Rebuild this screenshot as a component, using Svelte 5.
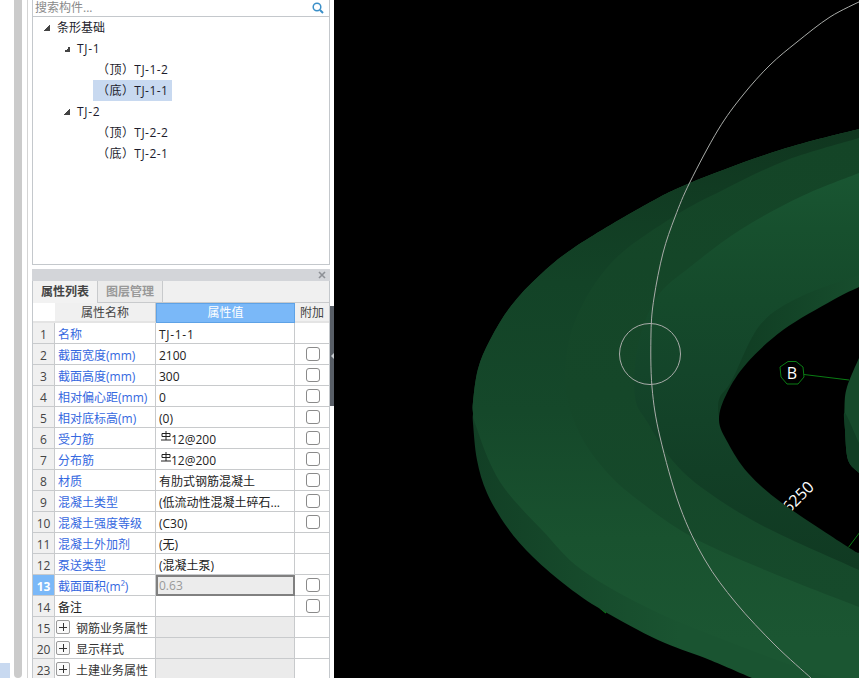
<script>
  const tree = [
    { level: 1, label: '条形基础', arrow: true },
    { level: 2, label: 'TJ-1', arrow: true },
    { level: 3, label: '（顶）TJ-1-2' },
    { level: 3, label: '（底）TJ-1-1', selected: true },
    { level: 2, label: 'TJ-2', arrow: true },
    { level: 3, label: '（顶）TJ-2-2' },
    { level: 3, label: '（底）TJ-2-1' }
  ]

  const rows = [
    { no: 1, name: '名称', value: 'TJ-1-1', link: true, code: true },
    { no: 2, name: '截面宽度(mm)', value: '2100', link: true, check: true },
    { no: 3, name: '截面高度(mm)', value: '300', link: true, check: true },
    { no: 4, name: '相对偏心距(mm)', value: '0', link: true, check: true },
    { no: 5, name: '相对底标高(m)', value: '(0)', link: true, check: true },
    { no: 6, name: '受力筋', value: '12@200', link: true, check: true, rebar: true },
    { no: 7, name: '分布筋', value: '12@200', link: true, check: true, rebar: true },
    { no: 8, name: '材质', value: '有肋式钢筋混凝土', link: true, check: true },
    { no: 9, name: '混凝土类型', value: '(低流动性混凝土碎石...', link: true, check: true },
    { no: 10, name: '混凝土强度等级', value: '(C30)', link: true, check: true },
    { no: 11, name: '混凝土外加剂', value: '(无)', link: true },
    { no: 12, name: '泵送类型', value: '(混凝土泵)', link: true },
    { no: 13, name: '截面面积(m²)', value: '0.63', link: true, check: true, active: true },
    { no: 14, name: '备注', value: '', check: true },
    { no: 15, name: '钢筋业务属性', group: true },
    { no: 20, name: '显示样式', group: true },
    { no: 23, name: '土建业务属性', group: true }
  ]

  // catmull-rom through the points, the model outlines are all smooth curves
  function curve(pts) {
    let d = `M${pts[0][0]} ${pts[0][1]}`
    for (let i = 0; i < pts.length - 1; i++) {
      const p0 = pts[i - 1] || pts[i]
      const p1 = pts[i]
      const p2 = pts[i + 1]
      const p3 = pts[i + 2] || p2
      const c1x = p1[0] + (p2[0] - p0[0]) / 6
      const c1y = p1[1] + (p2[1] - p0[1]) / 6
      const c2x = p2[0] - (p3[0] - p1[0]) / 6
      const c2y = p2[1] - (p3[1] - p1[1]) / 6
      d += `C${c1x.toFixed(1)} ${c1y.toFixed(1)} ${c2x.toFixed(1)} ${c2y.toFixed(1)} ${p2[0]} ${p2[1]}`
    }
    return d
  }

  function closedRight(pts) {
    return curve(pts) + 'L900 ' + pts[pts.length - 1][1] + 'L900 ' + pts[0][1] + 'Z'
  }

  // page coordinates, the svg viewBox starts at x 334
  const upper = [[859,129],[780,150],[690,183],[640,208],[575,247],[540,275],[511,306],[490,340],[478,369],[473,402],[473,413]]
  const outer = [...upper, [473,423],[477,460],[487,493],[507,527],[533,557],[568,587],[602,610],[658,640],[705,658],[752,678]]
  const face = [...upper, [475,423],[490,463],[508,493],[542,530],[582,570],[652,610],[732,643],[800,668],[835,678]]
  const band = [[859,138],[787,160],[723,190],[673,217],[612,262],[575,321],[565,380],[578,430],[605,470],[638,500],[692,537],[765,570],[859,607]]
  const inner = [[859,173],[800,197],[740,230],[690,267],[657,297],[638,345],[635,397],[648,423],[672,460],[705,490],[765,527],[859,570]]
  const wall = [[859,275],[800,297],[760,325],[732,380],[720,397],[718,410],[720,421]]
  const hole = [[859,287],[833,300],[783,330],[747,363],[727,393],[719,420],[728,443],[748,473],[782,503],[848,547],[859,553]]
  const island = [[859,358],[847,387],[844.5,407],[845,430],[848,460],[859,473]]
  const islandSide = [[859,443],[845,413],[845,430],[848,460],[859,473]]
  const arc = [[863,0],[830,17],[797,42],[770,65],[743,95],[718,130],[690,182],[675,217],[663,253],[654,298],[651,333],[652,387],[660,437],[680,507],[705,560],[736,603],[775,645],[811,678]]

  const holePath = closedRight(hole)
</script>

<div class="page">
  <aside class="side">
    <div class="gutter"><div class="patch"></div></div>
    <div class="scroll"></div>
    <div class="line"></div>

    <div class="panels">
      <div class="treePanel">
        <div class="search">
          <span>搜索构件...</span>
          <svg width="12" height="12" viewBox="0 0 12 12">
            <circle cx="5" cy="5" r="3.8" fill="none" stroke="#3a8fc8" stroke-width="1.5" />
            <path d="M8 8l3 3" stroke="#3a8fc8" stroke-width="2" />
          </svg>
        </div>
        <ul class="tree">
          {#each tree as node}
            <li class="node level{node.level}">
              {#if node.arrow}<i class="arrow"></i>{/if}
              <span class:selected={node.selected}>{node.label}</span>
            </li>
          {/each}
        </ul>
      </div>

      <div class="propPanel">
        <div class="propTitle">
          <svg width="8" height="8" viewBox="0 0 8 8"><path d="M1 1l6 6M7 1l-6 6" stroke="#8e9196" stroke-width="1.6" /></svg>
        </div>
        <div class="tabs">
          <div class="tab on">属性列表</div>
          <div class="tab">图层管理</div>
        </div>
        <div class="grid">
          <div class="head blank"></div>
          <div class="head">属性名称</div>
          <div class="head blue">属性值</div>
          <div class="head last">附加</div>

          {#each rows as row}
            <div class="no" class:noActive={row.active}>{row.no}</div>
            <div class="name" class:link={row.link}>
              {#if row.group}<i class="plus"></i>{/if}
              <span>{row.name}</span>
            </div>
            <div class="value" class:active={row.active} class:grey={row.group} class:code={row.code}>
              {#if row.rebar}
                <svg class="rebar" width="12" height="12" viewBox="0 0 12 12">
                  <path d="M2 3.5h8v3H2zM6 1v9M1 10h10" fill="none" stroke="#222" stroke-width="1" />
                </svg>
              {/if}
              <span>{row.value || ''}</span>
            </div>
            <div class="extra">
              {#if row.check}<i class="check"></i>{/if}
            </div>
          {/each}
        </div>
      </div>
    </div>

    <div class="handleCol">
      <div class="handle"><i class="handleArrow"></i></div>
    </div>
  </aside>

  <main class="view">
    <svg width="525" height="678" viewBox="334 0 525 678">
      <defs>
        <linearGradient id="sideFill" gradientUnits="userSpaceOnUse" x1="473" y1="0" x2="680" y2="0">
          <stop offset="0" stop-color="#123f25" />
          <stop offset="1" stop-color="#1a5431" />
        </linearGradient>
        <linearGradient id="faceFill" gradientUnits="userSpaceOnUse" x1="0" y1="129" x2="0" y2="640">
          <stop offset="0" stop-color="#10361f" />
          <stop offset="0.3" stop-color="#134327" />
          <stop offset="0.55" stop-color="#15482a" />
          <stop offset="0.8" stop-color="#19522f" />
          <stop offset="1" stop-color="#1b5632" />
        </linearGradient>
        <linearGradient id="bandFill" gradientUnits="userSpaceOnUse" x1="0" y1="138" x2="0" y2="600">
          <stop offset="0" stop-color="#144527" />
          <stop offset="0.55" stop-color="#154729" />
          <stop offset="1" stop-color="#164a2b" />
        </linearGradient>
        <linearGradient id="innerFill" gradientUnits="userSpaceOnUse" x1="0" y1="173" x2="0" y2="570">
          <stop offset="0" stop-color="#195632" />
          <stop offset="0.14" stop-color="#17502e" />
          <stop offset="0.32" stop-color="#154a2b" />
          <stop offset="0.5" stop-color="#14452a" />
          <stop offset="0.75" stop-color="#123f26" />
          <stop offset="1" stop-color="#103a22" />
        </linearGradient>
        <linearGradient id="wallFill" gradientUnits="userSpaceOnUse" x1="715" y1="0" x2="859" y2="0">
          <stop offset="0" stop-color="#0f3a21" />
          <stop offset="1" stop-color="#174d2d" />
        </linearGradient>
        <clipPath id="holeClip"><path d={holePath} /></clipPath>
      </defs>

      <path d="M600 608L606 613" stroke="#0a7d14" stroke-width="1.2" />
      <path d={curve(outer) + 'L900 678L900 129Z'} fill="url(#sideFill)" />
      <path d={curve(face) + 'L900 678L900 129Z'} fill="url(#faceFill)" />
      <path d={closedRight(band)} fill="url(#bandFill)" />
      <path d={closedRight(inner)} fill="url(#innerFill)" />
      <path d={closedRight(wall)} fill="url(#wallFill)" />
      <path d={holePath} fill="#000" />

      <g clip-path="url(#holeClip)">
        <text class="dim" transform="translate(789 514) rotate(-45)">6250</text>
        <path d="M848 548L860 532" stroke="#0a7d14" stroke-width="1" />
      </g>

      <path d={closedRight(island)} fill="#164a2b" />
      <path d={closedRight(islandSide)} fill="#113e24" />

      <path d="M804 374.5L849 380" stroke="#0a7d14" stroke-width="1" fill="none" />
      <polygon points="788,361.5 796,361.5 803,367 804,377 798,384 787,384 781,377 780,367" fill="#000" stroke="#0a7d14" stroke-width="1" />
      <text class="axis" x="792" y="379" text-anchor="middle">B</text>

      <path d={curve(arc)} fill="none" stroke="#a9aca9" stroke-width="1" />
      <circle cx="650" cy="354" r="30.5" fill="none" stroke="#a9aca9" stroke-width="1" />
    </svg>
  </main>
</div>

<style>
  :global(body) {
    margin: 0;
    background: #000;
  }
  .page {
    display: flex;
    width: 859px;
    height: 678px;
    overflow: hidden;
    font-family: "Open Sans", "Noto Sans CJK SC", sans-serif;
    font-size: 12px;
    color: #222;
  }
  .side {
    display: flex;
    width: 334px;
    height: 678px;
    background: #fff;
    flex: none;
  }
  .view {
    flex: 1;
    background: #000;
  }
  .view svg {
    display: block;
  }
  .dim,
  .axis {
    font-family: "Open Sans", sans-serif;
    font-size: 16px;
    fill: #fff;
  }

  .gutter {
    width: 14px;
    display: flex;
    flex-direction: column;
    justify-content: flex-end;
  }
  .patch {
    width: 10px;
    height: 15px;
    background: #c8d9f0;
  }
  .scroll {
    width: 8px;
    background: #cbcbcb;
    border-radius: 0 0 4px 4px;
  }
  .line {
    width: 1px;
    margin-left: 5px;
    background: #d4d4d4;
  }
  .panels {
    width: 298px;
    margin-left: 4px;
    display: flex;
    flex-direction: column;
    gap: 4px;
  }
  .treePanel {
    height: 265px;
    flex: none;
    box-sizing: border-box;
    border: solid #c4c8cc;
    border-width: 0 1px 1px;
    display: flex;
    flex-direction: column;
  }
  .search {
    height: 16px;
    flex: none;
    border-bottom: 1px solid #c4c8cc;
    display: flex;
    justify-content: space-between;
    align-items: center;
    padding: 0 5px 0 2px;
    color: #8a8a8a;
    line-height: 16px;
  }
  .tree {
    list-style: none;
    margin: 0;
    padding: 0;
  }
  .node {
    height: 21px;
    line-height: 21px;
    display: flex;
    align-items: center;
    position: relative;
    color: #1c1c2c;
  }
  .node span {
    padding: 0 4px;
    height: 21px;
  }
  .level1 { padding-left: 20px; }
  .level2 { padding-left: 40px; letter-spacing: 0.7px; }
  .level3 { padding-left: 60px; letter-spacing: 0.45px; }
  .selected {
    background: #c8d9f0;
  }
  .arrow {
    position: absolute;
    width: 6px;
    height: 6px;
    top: 8px;
    margin-left: -9px;
    background: linear-gradient(135deg, transparent 50%, #444 50%);
  }

  .propPanel {
    flex: 1;
    border: solid #c4c8cc;
    border-width: 0 1px;
    min-height: 0;
  }
  .propTitle {
    height: 12px;
    margin: 0 -1px;
    background: #d3d5d9;
    display: flex;
    align-items: center;
    justify-content: flex-end;
    padding-right: 4px;
  }
  .tabs {
    height: 21px;
    background: #f0f0f0;
    display: flex;
    border-bottom: 1px solid #c8cacc;
  }
  .tab {
    width: 64px;
    text-align: center;
    line-height: 21px;
    color: #999;
    font-weight: 700;
    background: #ebebeb;
    border-right: 1px solid #c8cacc;
  }
  .tab.on {
    color: #444;
    background: #f2f2f2;
    margin-bottom: -1px;
  }
  .grid {
    display: grid;
    grid-template-columns: 22px 101px 139px 34px;
    grid-template-rows: 20px;
    grid-auto-rows: 21px;
  }
  .grid > div {
    box-sizing: border-box;
    border-right: 1px solid #c8cacc;
    border-bottom: 1px solid #c8cacc;
    white-space: nowrap;
    overflow: hidden;
  }
  .grid > .head {
    height: 20px;
    background: #f0f0f0;
    text-align: center;
    line-height: 19px;
    color: #444;
    border-bottom: 2px solid #e4e4e4;
  }
  .grid > .blank {
    background: #fff;
    border-right: 0;
  }
  .grid > .blue {
    background: #7ab8f8;
    color: #fff;
    border: 1px solid #5ea2e6;
    line-height: 17px;
  }
  .grid > .last {
    border-right: 0;
  }
  .grid > .no {
    background: #f0f0f0;
    text-align: center;
    color: #444;
    line-height: 23px;
  }
  .grid > .noActive {
    background: #7ab8f8;
    color: #fff;
    font-weight: 700;
  }
  .name {
    padding: 2px 0 0 3px;
    display: flex;
    align-items: center;
  }
  .link {
    color: #3568e0;
  }
  .plus {
    width: 12px;
    height: 12px;
    border: 1px solid #999;
    border-radius: 2px;
    margin: -2px 6px 0 -2px;
    flex: none;
    background:
      linear-gradient(#333, #333) center / 8px 1px no-repeat,
      linear-gradient(#333, #333) center / 1px 8px no-repeat,
      #fafafa;
  }
  .plus + span {
    color: #333;
  }
  .grid > .value {
    padding: 2px 0 0 3px;
    display: flex;
    align-items: center;
  }
  .code {
    letter-spacing: 0.7px;
  }
  .grid > .active {
    background: #ececec;
    color: #999;
    border: 2px solid #808080;
    padding: 0 0 0 1px;
  }
  .grid > .grey {
    background: #ebebeb;
  }
  .rebar {
    margin: -6px -1px 0 1px;
    flex: none;
  }
  .grid > .extra {
    border-right: 0;
    display: flex;
    align-items: center;
    justify-content: center;
  }
  .check {
    display: block;
    width: 12px;
    height: 12px;
    border: 1px solid #8a8a8a;
    border-radius: 3px;
    background: #fff;
    margin-left: 1px;
  }

  .handleCol {
    width: 4px;
    padding-top: 306px;
  }
  .handle {
    height: 100px;
    background: #585e66;
    display: flex;
    align-items: center;
  }
  .handleArrow {
    width: 0;
    height: 0;
    margin-left: 1px;
    border: solid transparent;
    border-width: 3px 3px 3px 0;
    border-right-color: #c8ccd0;
  }
</style>
